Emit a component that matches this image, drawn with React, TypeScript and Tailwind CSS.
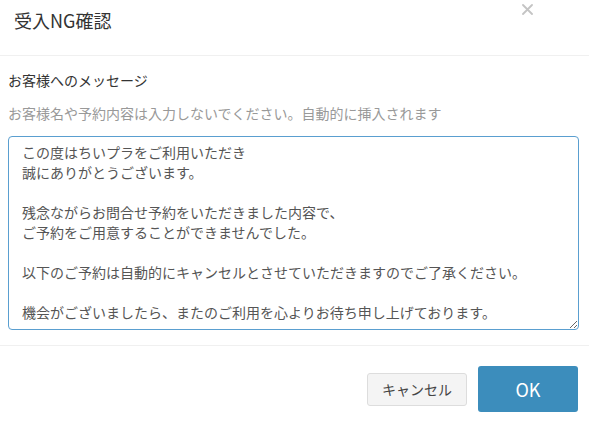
const message = `この度はちいプラをご利用いただき
誠にありがとうございます。

残念ながらお問合せ予約をいただきました内容で、
ご予約をご用意することができませんでした。

以下のご予約は自動的にキャンセルとさせていただきますのでご了承ください。

機会がございましたら、またのご利用を心よりお待ち申し上げております。`;

export default function App() {
  return (
    <div className="w-[589px] h-[423px] bg-white overflow-hidden font-['Noto_Sans_CJK_JP',sans-serif] text-[#333]">
      {/* Header */}
      <div className="h-[56px] border-b border-[#f0f0f0] flex items-start justify-between pl-[14px] pr-[56px]">
        <h4 className="text-[18px] leading-[24px] mt-[8px]">受入NG確認</h4>
        <button className="mt-[4px]" aria-label="閉じる">
          <svg width="11" height="11" viewBox="0 0 11 11" className="block">
            <path d="M1 1L10 10M10 1L1 10" stroke="#c4c4c4" strokeWidth="1.8" strokeLinecap="round" />
          </svg>
        </button>
      </div>

      {/* Body */}
      <div className="px-[8px] pt-[14px]">
        <label className="block text-[14px] leading-[20px]">お客様へのメッセージ</label>
        <p className="text-[14px] leading-[20px] text-[#999] mt-[13px]">
          お客様名や予約内容は入力しないでください。自動的に挿入されます
        </p>
        <textarea
          defaultValue={message}
          className="mt-[13px] block w-[571px] h-[194px] border border-[#5a9fd0] rounded-[4px] px-[13px] pt-[5px] text-[14px] leading-[20px] text-[#555] outline-none resize-y"
        />
      </div>

      {/* Footer */}
      <div className="mt-[15px] border-t border-[#f0f0f0] flex justify-end items-center gap-[11px] pr-[11px] pt-[20px]">
        <button className="w-[100px] h-[33px] bg-[#f4f4f4] border border-[#ddd] rounded-[3px] text-[14px] text-[#444]">
          キャンセル
        </button>
        <button className="w-[100px] h-[46px] bg-[#3c8dbc] rounded-[3px] text-[18px] text-white">
          OK
        </button>
      </div>
    </div>
  );
}
